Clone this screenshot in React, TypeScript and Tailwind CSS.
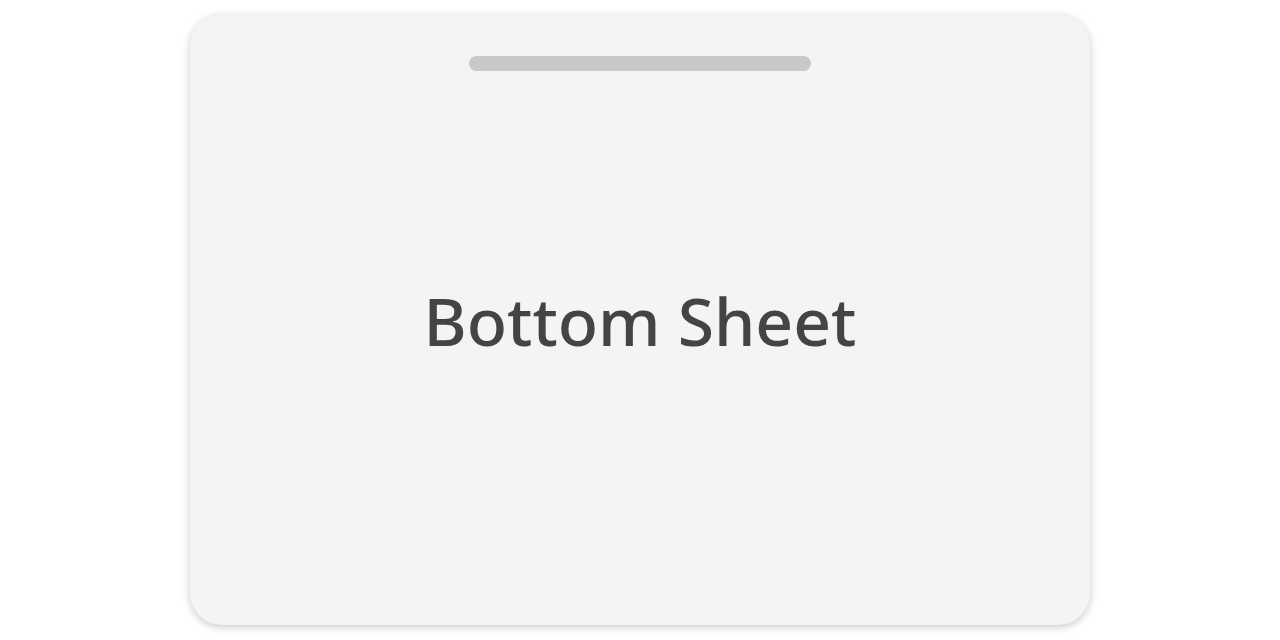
export default function App() {
  return (
    <div className="w-[1280px] h-[640px] bg-white flex items-center justify-center">
      <div className="relative w-[900px] h-[610px] rounded-[32px] bg-[#f4f4f4] shadow-[0_2px_8px_rgba(0,0,0,0.22)] flex items-center justify-center">
        <div className="absolute top-[41px] left-1/2 -translate-x-1/2 w-[342px] h-[15px] rounded-full bg-[#c8c8c8]" />
        <h1 className="text-[66px] leading-none font-medium text-[#444444]" style={{ fontFamily: '"Noto Sans", sans-serif' }}>
          Bottom Sheet
        </h1>
      </div>
    </div>
  );
}
